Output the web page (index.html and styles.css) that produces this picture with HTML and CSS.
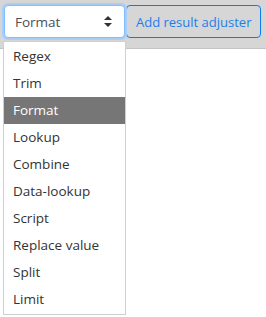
FILE: index.html
```html
<!DOCTYPE html>
<html lang="en">
<head>
    <meta charset="UTF-8">
    <title>Result adjusters</title>
    <link rel="stylesheet" href="styles.css">
</head>
<body>
    <div class="toolbar">
        <div class="select-wrap">
            <div class="select">
                <span>Format</span>
                <svg class="caret" width="8" height="11" viewBox="0 0 8 11"><path d="M4 0 L8 4 L0 4 Z M0 7 L8 7 L4 11 Z" fill="#333"/></svg>
            </div>
            <ul class="menu">
                <li>Regex</li>
                <li>Trim</li>
                <li class="active">Format</li>
                <li>Lookup</li>
                <li>Combine</li>
                <li>Data-lookup</li>
                <li>Script</li>
                <li>Replace value</li>
                <li>Split</li>
                <li>Limit</li>
            </ul>
        </div>
        <button class="add-btn">Add result adjuster</button>
    </div>
</body>
</html>
```

FILE: styles.css
```css
html, body {
    height: 100%;
}
body {
    margin: 0;
    min-height: 317px;
    background: #fff;
    font-family: "Open Sans", "Noto Sans", sans-serif;
}
.toolbar {
    display: flex;
    align-items: flex-start;
    gap: 1px;
    padding: 5px 4px 0 4px;
    height: 49px;
    box-sizing: border-box;
    background: #d6d6d6;
    border-bottom: 1px solid #c4c4c4;
}
.select-wrap {
    position: relative;
    z-index: 5;
}
.select {
    width: 121px;
    height: 33px;
    box-sizing: border-box;
    display: flex;
    align-items: center;
    justify-content: space-between;
    padding: 0 12px 0 10px;
    background: #fff;
    border: 1px solid #80bdff;
    border-radius: 4px;
    box-shadow: 0 0 0 2px #a9cdf5;
    font-size: 13.5px;
    color: #495057;
}
.menu {
    position: absolute;
    z-index: 10;
    top: 36px;
    left: -1px;
    width: 121px;
    margin: 0;
    padding: 1px 0;
    list-style: none;
    background: #fff;
    border: 1px solid #cfcfcf;
    font-size: 13.5px;
    color: #333;
}
.menu li {
    height: 27px;
    line-height: 27px;
    padding-left: 9px;
}
.menu li.active {
    background: #767676;
    color: #fff;
}
.add-btn {
    height: 33px;
    padding: 0 9px;
    background: transparent;
    border: 1px solid #0d7bf0;
    border-radius: 4px;
    color: #1a7ff0;
    font-family: "Open Sans", "Noto Sans", sans-serif;
    font-size: 13px;
}
```
